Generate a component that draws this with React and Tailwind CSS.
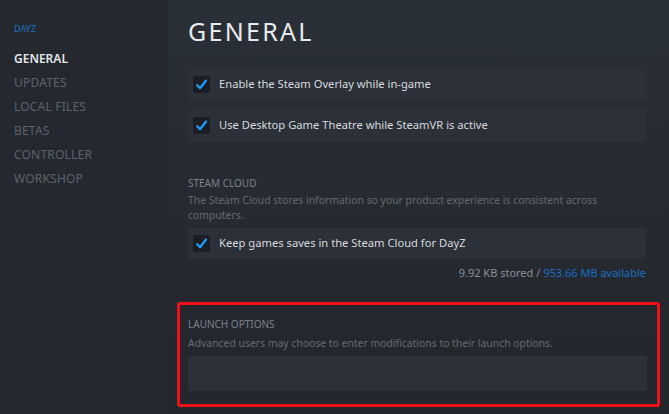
import React from "react";

const Check = () => (
  <div className="w-[17px] h-[17px] rounded-[2px] bg-[#1b1e24] flex items-center justify-center shrink-0">
    <svg width="13" height="13" viewBox="0 0 13 13">
      <path d="M2.2 7.2 L5 10.2 L11 2.5" fill="none" stroke="#1a9fff" strokeWidth="2.2" strokeLinecap="round" strokeLinejoin="round" />
    </svg>
  </div>
);

const Row = ({ children, h = "h-[34px]" }) => (
  <div className={`${h} bg-[#2c3038] rounded-[2px] flex items-center gap-[9px] pl-[5px]`}>
    <Check />
    <span className="text-[11.2px] text-[#d7dade]">{children}</span>
  </div>
);

export default function App() {
  const side = ["UPDATES", "LOCAL FILES", "BETAS", "CONTROLLER", "WORKSHOP"];
  return (
    <div
      className="w-[669px] h-[414px] flex overflow-hidden bg-[#24272e]"
      style={{ fontFamily: '"Noto Sans", "Open Sans", sans-serif' }}
    >
      <div className="w-[168px] shrink-0 bg-[#25282e] pl-[14px] pt-[22px]">
        <div className="text-[9px] text-[#1a76c4] leading-[14px] mb-[11px]">DAYZ</div>
        <div className="text-[12px] font-semibold text-[#e6e8ea] leading-[24px]">GENERAL</div>
        {side.map((s) => (
          <div key={s} className="text-[12px] text-[#5d636c] leading-[24px] tracking-[0.2px]">{s}</div>
        ))}
      </div>
      <div className="flex-1 bg-gradient-to-b from-[#2a3038] via-[#262a31] to-[#23262c] pl-[20px] pr-[23px]">
        <div className="text-[25px] leading-[30px] text-[#e8eaec] tracking-[2.3px] pt-[16px]">GENERAL</div>
        <div className="mt-[21px] flex flex-col gap-[7px]">
          <Row>Enable the Steam Overlay while in-game</Row>
          <Row>Use Desktop Game Theatre while SteamVR is active</Row>
        </div>
        <div className="mt-[34px] text-[10px] text-[#7c828b] leading-[14px]">STEAM CLOUD</div>
        <div className="mt-[3px] text-[10.4px] text-[#656b74] leading-[15px] max-w-[425px]">
          The Steam Cloud stores information so your product experience is consistent across computers.
        </div>
        <div className="mt-[5px]">
          <Row h="h-[31px]">Keep games saves in the Steam Cloud for DayZ</Row>
        </div>
        <div className="mt-[5px] text-right text-[11px] leading-[18px] text-[#8b9099]">
          9.92 KB stored / <span className="text-[#1a6ec4]">953.66 MB available</span>
        </div>
        <div className="mt-[20px] -ml-[11px] -mr-[14px] h-[105px] border-[3px] border-[#f01018] rounded-[3px] pl-[8px] pr-[10px] pt-[12px]">
          <div className="text-[10px] text-[#7c828b] leading-[14px]">LAUNCH OPTIONS</div>
          <div className="mt-[5px] text-[10.4px] text-[#656b74] leading-[14px]">
            Advanced users may choose to enter modifications to their launch options.
          </div>
          <div className="mt-[6px] h-[35px] bg-[#2c3038] rounded-[2px]"></div>
        </div>
      </div>
    </div>
  );
}
